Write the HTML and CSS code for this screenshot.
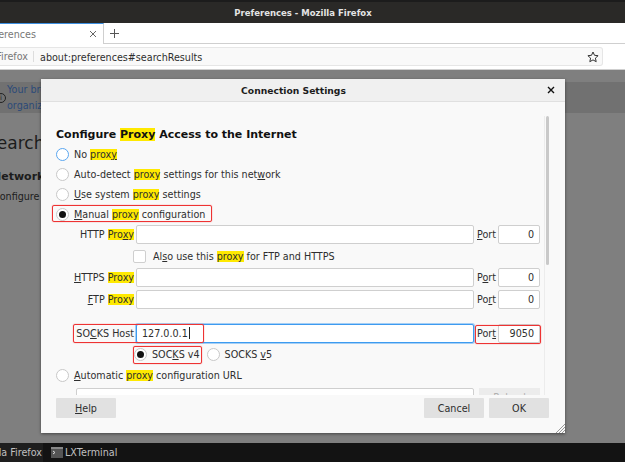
FILE: index.html
```html
<!DOCTYPE html>
<html lang="en">
  <head>
    <meta charset="UTF-8" />
    <title>Preferences - Mozilla Firefox</title>
    <link rel="stylesheet" href="styles.css">
  </head>
  <body>
    <div class="titlebar">Preferences - Mozilla Firefox</div>

    <div class="tabbar">
      <div class="tab">
        <span class="tab-label">Preferences</span>
        <svg class="tab-close" width="8" height="8" viewBox="0 0 8 8"><path d="M1 1l6 6M7 1l-6 6" stroke="#666" stroke-width="1" fill="none" /></svg>
      </div>
      <div class="tab-rest">
        <svg class="tab-new" width="11" height="11" viewBox="0 0 11 11"><path d="M5.5 1v9M1 5.5h9" stroke="#555" stroke-width="1" fill="none" /></svg>
      </div>
    </div>

    <div class="toolbar">
      <div class="urlbar">
        <span class="identity">Firefox</span>
        <span class="url">about:preferences#searchResults</span>
        <svg class="star" width="12" height="12" viewBox="0 0 12 12"><path d="M6 1l1.5 3.3 3.6.4-2.7 2.4.8 3.6L6 8.9l-3.2 1.8.8-3.6L.9 4.7l3.6-.4z" stroke="#333" stroke-width="1" fill="none" stroke-linejoin="round" /></svg>
      </div>
    </div>

    <div class="content">
      <div class="notice">
        <span class="notice-icon">i</span>
        <p>Your browser is being managed by your<br />organization</p>
      </div>
      <h2 class="search-title">Search Results</h2>
      <h3 class="search-group">Network Settings</h3>
      <p class="search-text">Configure how Firefox connects to the internet.</p>

      <div class="dialog">
        <div class="dialog-head">
          <span>Connection Settings</span>
          <svg class="dialog-close" width="8" height="8" viewBox="0 0 8 8"><path d="M1 1l6 6M7 1l-6 6" stroke="#111" stroke-width="1.4" fill="none" /></svg>
        </div>

        <div class="dialog-body">
          <div class="scroller">
            <h4 class="config-title">Configure <mark>Proxy</mark> Access to the Internet</h4>

            <div class="radio-row"><span class="radio radio-focus"></span><span>No <mark>prox<u>y</u></mark></span></div>
            <div class="radio-row"><span class="radio"></span><span>Auto-detect <mark>proxy</mark> settings for this net<u>w</u>ork</span></div>
            <div class="radio-row"><span class="radio"></span><span><u>U</u>se system <mark>proxy</mark> settings</span></div>
            <div class="radio-row"><span class="radio radio-on"></span><span><u>M</u>anual <mark>proxy</mark> configuration</span></div>

            <div class="field-row">
              <label>HTTP <mark>Pro<u>x</u>y</mark></label>
              <span class="input"></span>
              <label class="port-label"><u>P</u>ort</label>
              <span class="input port">0</span>
            </div>
            <div class="check-row">
              <span class="checkbox"></span>
              <span>Al<u>s</u>o use this <mark>proxy</mark> for FTP and HTTPS</span>
            </div>
            <div class="field-row">
              <label><u>H</u>TTPS <mark>Proxy</mark></label>
              <span class="input"></span>
              <label class="port-label">P<u>o</u>rt</label>
              <span class="input port">0</span>
            </div>
            <div class="field-row field-ftp">
              <label><u>F</u>TP <mark>Proxy</mark></label>
              <span class="input"></span>
              <label class="port-label">Po<u>r</u>t</label>
              <span class="input port">0</span>
            </div>
            <div class="field-row field-socks">
              <label>SO<u>C</u>KS Host</label>
              <span class="input input-focus">127.0.0.1<i class="caret"></i></span>
              <label class="port-label">Por<u>t</u></label>
              <span class="input port">9050</span>
            </div>
            <div class="socks-row">
              <div class="radio-row"><span class="radio radio-on"></span><span>SOC<u>K</u>S v4</span></div>
              <div class="radio-row"><span class="radio"></span><span>SOCKS <u>v</u>5</span></div>
            </div>
            <div class="radio-row"><span class="radio"></span><span><u>A</u>utomatic <mark>proxy</mark> configuration URL</span></div>
            <div class="auto-row">
              <span class="input"></span>
              <span class="reload">Reload</span>
            </div>
          </div>
          <div class="scrollbar"><div class="thumb"></div></div>
        </div>

        <div class="dialog-foot">
          <button class="btn"><u>H</u>elp</button>
          <div class="foot-right">
            <button class="btn">Cancel</button>
            <button class="btn">OK</button>
          </div>
        </div>

        <svg class="resizer" width="9" height="9" viewBox="0 0 9 9"><path d="M9 0L0 9M9 3L3 9M9 6L6 9" stroke="#999" stroke-width="1" fill="none" /></svg>
      </div>

      <!-- red marks drawn on top of the screenshot -->
      <div class="mark-box mark-manual"></div>
      <div class="mark-box mark-host"></div>
      <div class="mark-box mark-v4"></div>
      <div class="mark-box mark-port"></div>
    </div>

    <div class="taskbar">
      <div class="task task-firefox">Mozilla Firefox</div>
      <div class="task">
        <svg width="12" height="11" viewBox="0 0 12 11"><rect width="12" height="11" fill="#555" /><rect y="0" width="12" height="2" fill="#888" /><path d="M2 4l2 1.5L2 7" stroke="#ddd" stroke-width="1" fill="none" /></svg>
        <span>LXTerminal</span>
      </div>
    </div>
  </body>
</html>
```

FILE: styles.css
```css
html,
body {
  margin: 0;
  height: 100%;
}

body {
  width: 625px;
  height: 462px;
  overflow: hidden;
  display: flex;
  flex-direction: column;
  font-family: "DejaVu Sans", sans-serif;
  font-size: 9.6px;
  color: #2e2e2e;
  background: #7f7f7f;
}

.titlebar {
  height: 23px;
  flex: none;
  display: flex;
  align-items: center;
  justify-content: center;
  box-sizing: border-box;
  padding: 1px 19px 0 0;
  background: #2a2927;
  border-top: 2px solid #1c1c1c;
  color: #e4e4e4;
  font-size: 8.5px;
  font-weight: bold;
}

.tabbar {
  height: 21px;
  flex: none;
  display: flex;
  background: #fff;
}

.tab {
  width: 104px;
  flex: none;
  display: flex;
  align-items: center;
  justify-content: flex-end;
  box-sizing: border-box;
  position: relative;
  overflow: hidden;
  background: #fff;
  border-top: 1px solid #3d8fe0;
  border-right: 1px solid #cfcfcf;
  color: #777;
}

.tab-label {
  margin-right: 67px;
  white-space: nowrap;
}

.tab-close {
  position: absolute;
  right: 6px;
  top: 6px;
}

.tab-rest {
  flex: 1;
  display: flex;
  align-items: center;
  box-sizing: border-box;
  border-bottom: 1px solid #cfcfcf;
}

.tab-new {
  margin-left: 5px;
}

.toolbar {
  height: 26px;
  flex: none;
  box-sizing: border-box;
  padding-top: 3px;
  background: #fff;
  border-bottom: 1px solid #cfcfcf;
}

.urlbar {
  width: 603px;
  height: 19px;
  display: flex;
  align-items: center;
  box-sizing: border-box;
  background: #f9f9f9;
  border: 1px solid #e6e6e6;
  border-left: none;
  border-radius: 0 3px 3px 0;
  overflow: hidden;
}

.identity {
  width: 34px;
  flex: none;
  direction: rtl;
  overflow: hidden;
  color: #777;
  border-right: 1px solid #ddd;
  box-sizing: border-box;
  padding-right: 5px;
  white-space: nowrap;
}

.url {
  margin-left: 6px;
  padding-top: 1px;
  flex: 1;
}

.star {
  margin-right: 3px;
}

.content {
  flex: 1;
  position: relative;
  overflow: hidden;
  background: #7f7f7f;
  color: #1c1c1c;
}

.notice {
  height: 31px;
  margin-top: 12px;
  display: flex;
  align-items: center;
  background: #717171;
  color: #2c4a78;
}

.notice p {
  margin: 0 0 0 1px;
  line-height: 16px;
  white-space: nowrap;
}

.notice-icon {
  width: 8px;
  height: 8px;
  flex: none;
  margin-left: -4px;
  border: 1px solid #222;
  border-radius: 50%;
  font-size: 7px;
  line-height: 8px;
  text-align: center;
  color: #222;
}

.search-title {
  margin: 20px 0 0 -14px;
  font-size: 17px;
  font-weight: normal;
  white-space: nowrap;
}

.search-group {
  margin: 17px 0 0 -8px;
  font-size: 11px;
  white-space: nowrap;
}

.search-text {
  margin: 8px 0 0 -7px;
  white-space: nowrap;
}

.dialog {
  position: absolute;
  left: 41px;
  top: 9px;
  width: 524px;
  height: 354px;
  display: flex;
  flex-direction: column;
  background: #f9f9f9;
  box-shadow: 0 1px 3px rgba(0, 0, 0, 0.45);
}

.dialog-head {
  height: 22px;
  flex: none;
  display: flex;
  align-items: center;
  justify-content: center;
  position: relative;
  padding-right: 19px;
  background: #f0f0f0;
  border-bottom: 1px solid #e0e0e0;
  font-size: 9.2px;
  font-weight: bold;
  color: #1c1c1c;
}

.dialog-close {
  position: absolute;
  right: 10px;
  top: 7px;
}

.dialog-body {
  flex: 1;
  display: flex;
  min-height: 0;
  overflow: hidden;
  color: #2e2e2e;
}

.scroller {
  width: 484px;
  margin-left: 15px;
  padding-top: 25px;
  flex: none;
}

.scrollbar {
  width: 6px;
  height: 100%;
  margin: 14px 0 0 4px;
  border-left: 1px solid #ececec;
}

.thumb {
  width: 3px;
  height: 149px;
  margin-left: 1px;
  border-radius: 2px;
  background: #c9c9c9;
}

mark {
  background: #ffe900;
  color: inherit;
}

u {
  text-underline-offset: 1px;
}

.config-title {
  margin: 0 0 1px;
  font-size: 11px;
  line-height: 16px;
  font-weight: bold;
  color: #111;
}

.radio-row {
  height: 20px;
  display: flex;
  align-items: center;
  gap: 5px;
  white-space: nowrap;
}

.radio {
  width: 11px;
  height: 11px;
  flex: none;
  display: flex;
  align-items: center;
  justify-content: center;
  background: #fff;
  border: 1px solid #c8c8c8;
  border-radius: 50%;
}

.radio-focus {
  border-color: #5aa6f0;
}

.radio-on::after {
  content: "";
  width: 7px;
  height: 7px;
  border-radius: 50%;
  background: #111;
}

.field-row {
  height: 19px;
  margin-top: 1px;
  display: grid;
  grid-template-columns: 80px 338px 24px 42px;
  align-items: center;
}

.field-row label {
  text-align: right;
  padding-right: 2px;
  white-space: nowrap;
}

.field-row .port-label {
  text-align: left;
  padding: 0 0 0 3px;
}

.field-ftp {
  margin-top: 3px;
}

.field-socks {
  margin-top: 15px;
}

.input {
  height: 19px;
  display: block;
  box-sizing: border-box;
  padding: 0 5px;
  background: #fff;
  border: 1px solid #cfcfcf;
  border-radius: 2px;
  line-height: 17px;
}

.port {
  text-align: right;
}

.input-focus {
  border-color: #3d9bf0;
  box-shadow: 0 0 0 1px rgba(61, 155, 240, 0.45);
}

.caret {
  display: inline-block;
  width: 1px;
  height: 12px;
  margin-left: 1px;
  vertical-align: -2px;
  background: #222;
}

.check-row {
  height: 20px;
  margin: 2px 0 2px 77px;
  display: flex;
  align-items: center;
  gap: 7px;
  white-space: nowrap;
}

.checkbox {
  width: 11px;
  height: 11px;
  flex: none;
  background: #fff;
  border: 1px solid #cfcfcf;
  border-radius: 2px;
}

.socks-row {
  margin: 1px 0 1px 78px;
  display: flex;
  gap: 7px;
}

.auto-row {
  display: grid;
  grid-template-columns: 398px 61px;
  column-gap: 5px;
  margin: 3px 0 0 20px;
}

.reload {
  height: 19px;
  display: flex;
  align-items: center;
  justify-content: center;
  background: #ececec;
  color: #b0b0b0;
}

.dialog-foot {
  height: 38px;
  flex: none;
  position: relative;
  display: flex;
  justify-content: space-between;
  box-sizing: border-box;
  padding: 3px 16px 0 15px;
  background: #f9f9f9;
}

.foot-right {
  display: flex;
  gap: 5px;
}

.btn {
  width: 60px;
  height: 20px;
  padding: 0;
  border: none;
  background: #e1e1e1;
  border-radius: 1px;
  font-family: inherit;
  font-size: 9.6px;
  color: #2e2e2e;
}

.resizer {
  position: absolute;
  right: 0;
  bottom: 0;
}

.mark-box {
  position: absolute;
  box-sizing: border-box;
  border: 1px solid #ee3333;
  border-radius: 2px;
  box-shadow: 0 0 1px #ee3333;
}

.mark-manual {
  left: 52px;
  top: 135px;
  width: 160px;
  height: 17px;
}

.mark-host {
  left: 73px;
  top: 254px;
  width: 131px;
  height: 19px;
}

.mark-v4 {
  left: 133px;
  top: 276px;
  width: 69px;
  height: 18px;
}

.mark-port {
  left: 475px;
  top: 255px;
  width: 66px;
  height: 19px;
}

.taskbar {
  height: 19px;
  flex: none;
  display: flex;
  align-items: center;
  background: #131313;
  color: #c0c0c0;
  overflow: hidden;
}

.task {
  display: flex;
  align-items: center;
  gap: 2px;
  height: 100%;
  margin-left: 8px;
}

.task-firefox {
  width: 43px;
  margin-left: 0;
  justify-content: flex-end;
  padding-right: 1px;
  box-sizing: border-box;
  background: #1e1e1e;
  white-space: nowrap;
}
```
